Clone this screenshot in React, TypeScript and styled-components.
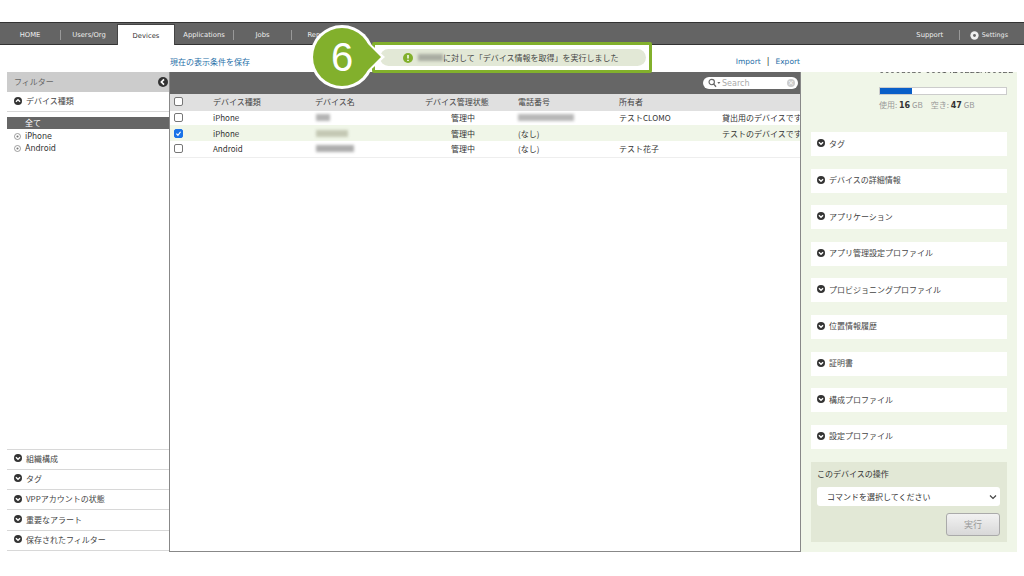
import { FC } from 'react';
import styled, { createGlobalStyle } from 'styled-components';

const FONT = `"DejaVu Sans", "Noto Sans CJK JP", sans-serif`;
const JP = `"Noto Sans CJK JP", "Noto Sans", sans-serif`;

const GlobalStyle = createGlobalStyle`
  html, body {
    margin: 0;
    background: #fff;
    overflow: hidden;
  }
  * {
    box-sizing: border-box;
  }
`;

const devices = [
  { type: 'iPhone', status: '管理中', phone: '', owner: 'テストCLOMO', note: '貸出用のデバイスです', nameW: 14, nameTone: '#b4b4b4' },
  { type: 'iPhone', status: '管理中', phone: '(なし)', owner: '', note: 'テストのデバイスです', nameW: 32, nameTone: '#c4c8b4', selected: true },
  { type: 'Android', status: '管理中', phone: '(なし)', owner: 'テスト花子', note: '', nameW: 38, nameTone: '#adadad' },
];

const leftSections = ['組織構成', 'タグ', 'VPPアカウントの状態', '重要なアラート', '保存されたフィルター'];
const rightSections = [
  'タグ',
  'デバイスの詳細情報',
  'アプリケーション',
  'アプリ管理設定プロファイル',
  'プロビジョニングプロファイル',
  '位置情報履歴',
  '証明書',
  '構成プロファイル',
  '設定プロファイル',
];

const Chevron: FC<{ up?: boolean; left?: boolean; size?: number }> = ({ up, left, size = 8 }) => (
  <svg width={size} height={size} viewBox="0 0 10 10" style={{ flex: 'none' }}>
    <circle cx="5" cy="5" r="5" fill="#333" />
    <path
      d={left ? 'M6 2.4 3.4 5 6 7.6' : up ? 'M2.4 6 5 3.4 7.6 6' : 'M2.4 4 5 6.6 7.6 4'}
      fill="none"
      stroke="#fff"
      strokeWidth="1.7"
    />
  </svg>
);

const RadioMark: FC = () => (
  <svg width="7" height="7" viewBox="0 0 10 10" style={{ flex: 'none' }}>
    <circle cx="5" cy="5" r="4.3" fill="none" stroke="#777" strokeWidth="1" />
    <circle cx="5" cy="5" r="1.5" fill="#777" />
  </svg>
);

const Check: FC<{ on?: boolean }> = ({ on }) => (
  <CheckBox $on={on}>
    {on && (
      <svg width="9" height="9" viewBox="0 0 10 10">
        <path d="M2 5.2 4.2 7.5 8 2.5" fill="none" stroke="#fff" strokeWidth="1.7" />
      </svg>
    )}
  </CheckBox>
);

const App: FC = () => {
  return (
    <>
      <GlobalStyle />
      <Page>
        <NavBar>
          <NavItem $w={60}>HOME</NavItem>
          <NavSep />
          <NavItem $w={56}>Users/Org</NavItem>
          <ActiveTab>Devices</ActiveTab>
          <NavItem $w={58}>Applications</NavItem>
          <NavSep />
          <NavItem $w={57}>Jobs</NavItem>
          <NavSep />
          <NavItem $w={57}>Reports</NavItem>
          <NavRight>
            <NavItem $w={58}>Support</NavItem>
            <NavSep />
            <SettingsItem>
              <svg width="9" height="9" viewBox="0 0 10 10">
                <circle cx="5" cy="5" r="4.6" fill="#eee" />
                <circle cx="5" cy="5" r="1.6" fill="#666" />
              </svg>
              Settings
            </SettingsItem>
          </NavRight>
        </NavBar>

        <LinkRow>
          <SaveLink>現在の表示条件を保存</SaveLink>
          <ImportExport>
            <BlueLink>Import</BlueLink>
            <Bar>|</Bar>
            <BlueLink>Export</BlueLink>
          </ImportExport>
        </LinkRow>

        <Main>
          <LeftPanel>
            <FilterHead>
              フィルター
              <Chevron left size={10} />
            </FilterHead>
            <SectionRow $open>
              <Chevron up />
              デバイス種類
            </SectionRow>
            <FilterList>
              <AllRow>全て</AllRow>
              <FilterOption>
                <RadioMark />
                iPhone
              </FilterOption>
              <FilterOption>
                <RadioMark />
                Android
              </FilterOption>
            </FilterList>
            {leftSections.map((s) => (
              <SectionRow key={s}>
                <Chevron />
                {s}
              </SectionRow>
            ))}
          </LeftPanel>

          <CenterPanel>
            <Toolbar>
              <SearchPill>
                <svg width="13" height="10" viewBox="0 0 14 10">
                  <circle cx="4" cy="4" r="2.9" fill="none" stroke="#666" strokeWidth="1.2" />
                  <path d="M6 6 8.6 9" stroke="#666" strokeWidth="1.4" />
                  <path d="M10 4h3.4l-1.7 2.2z" fill="#666" />
                </svg>
                <SearchText>Search</SearchText>
                <ClearDot>×</ClearDot>
              </SearchPill>
            </Toolbar>
            <HeadRow>
              <Check />
              <span>デバイス種類</span>
              <span>デバイス名</span>
              <span>デバイス管理状態</span>
              <span>電話番号</span>
              <span>所有者</span>
              <span />
            </HeadRow>
            {devices.map((d, i) => (
              <BodyRow key={i} $selected={d.selected} $tall={i > 0}>
                <Check on={d.selected} />
                <span>{d.type}</span>
                <NameCell>
                  <Smudge $tone={d.nameTone} style={{ width: d.nameW }} />
                </NameCell>
                <StatusCell>{d.status}</StatusCell>
                <span>{d.phone || <Smudge $tone="#b8b8b8" style={{ width: 56 }} />}</span>
                <span>{d.owner}</span>
                <NoteCell>{d.note}</NoteCell>
              </BodyRow>
            ))}
            <TableEnd />
          </CenterPanel>

          <RightPanel>
            <IdLine>00008030-00014D0E21A0002E</IdLine>
            <Storage>
              <StorageTrack>
                <StorageFill style={{ width: '25%' }} />
              </StorageTrack>
              <StorageText>
                使用: <b>16</b> GB　空き: <b>47</b> GB
              </StorageText>
            </Storage>
            <Accordions>
              {rightSections.map((s) => (
                <AccordionRow key={s}>
                  <Chevron />
                  {s}
                </AccordionRow>
              ))}
            </Accordions>
            <OperationBox>
              <OperationTitle>このデバイスの操作</OperationTitle>
              <CommandSelect>
                コマンドを選択してください
                <svg width="8" height="6" viewBox="0 0 8 6">
                  <path d="M1 1.5 4 4.5 7 1.5" fill="none" stroke="#444" strokeWidth="1.2" />
                </svg>
              </CommandSelect>
              <RunButton>実行</RunButton>
            </OperationBox>
          </RightPanel>
        </Main>

        <Callout>
          <Badge>
            <svg width="76" height="66" viewBox="0 0 76 66">
              <path d="M54 14 75 33 54 52z" fill="#fff" />
              <circle cx="32" cy="33" r="32" fill="#fff" />
              <circle cx="32" cy="33" r="29" fill="#82b02c" />
              <path d="M56 18 71 33 56 48z" fill="#82b02c" />
            </svg>
            <BadgeNumber>6</BadgeNumber>
          </Badge>
          <MessageBox>
            <MessagePill>
              <svg width="10" height="10" viewBox="0 0 10 10" style={{ flex: 'none' }}>
                <circle cx="5" cy="5" r="5" fill="#82b02c" />
                <path d="M5 2v3.4M5 6.7v1.2" stroke="#fff" strokeWidth="1.5" />
              </svg>
              <Smudge $tone="#a9aca2" style={{ width: 25, marginLeft: 5 }} />
              に対して「デバイス情報を取得」を実行しました
            </MessagePill>
          </MessageBox>
        </Callout>
      </Page>
    </>
  );
};

export default App;

const Page = styled.div`
  position: relative;
  width: 1024px;
  height: 576px;
  padding-top: 22px;
  font-family: ${FONT};
  color: #333;
  overflow: hidden;
`;

const NavBar = styled.div`
  display: flex;
  align-items: center;
  height: 23px;
  background: #646464;
  border-top: 1px solid #333;
  border-bottom: 1px solid #333;
  color: #eee;
  font-size: 6.8px;
`;

const NavItem = styled.div<{ $w: number }>`
  width: ${(p) => p.$w}px;
  padding-top: 3px;
  text-align: center;
`;

const NavSep = styled.div`
  width: 1px;
  height: 10px;
  margin-top: 3px;
  background: #999;
`;

const ActiveTab = styled.div`
  align-self: flex-end;
  width: 58px;
  height: 21px;
  margin-bottom: -1px;
  padding-top: 7px;
  background: #fff;
  border: 1px solid #444;
  border-bottom: none;
  color: #333;
  text-align: center;
`;

const NavRight = styled.div`
  display: flex;
  align-items: center;
  margin-left: auto;
  padding-right: 16px;
`;

const SettingsItem = styled.div`
  display: flex;
  align-items: center;
  gap: 3px;
  margin-left: 10px;
  padding-top: 3px;
  font-size: 6.4px;
`;

const LinkRow = styled.div`
  display: flex;
  align-items: center;
  height: 27px;
  padding: 6px 224px 0 170px;
  font-size: 8px;
`;

const SaveLink = styled.span`
  font-family: ${JP};
  color: #1f6fa8;
`;

const ImportExport = styled.div`
  display: flex;
  gap: 6px;
  margin-left: auto;
`;

const BlueLink = styled.span`
  color: #1f6fa8;
  font-size: 7.5px;
`;

const Bar = styled.span`
  color: #333;
`;

const Main = styled.div`
  display: flex;
  align-items: stretch;
  height: 480px;
  margin-left: 7px;
  width: 1010px;
`;

const LeftPanel = styled.div`
  display: flex;
  flex-direction: column;
  width: 162px;
  margin-bottom: 1px;
  font-family: ${JP};
  font-size: 8px;
`;

const FilterHead = styled.div`
  display: flex;
  align-items: center;
  justify-content: space-between;
  height: 20px;
  padding: 0 1px 1px 7px;
  background: #ccc;
  color: #666;
`;

const SectionRow = styled.div<{ $open?: boolean }>`
  display: flex;
  align-items: center;
  gap: 4px;
  height: 20.3px;
  flex: none;
  padding: 0 0 2px 7px;
  background: #fff;
  border-bottom: 1px solid #d8d8d8;
  color: #444;
`;

const FilterList = styled.div`
  flex: 1;
  padding-top: 5px;
  border-bottom: 1px solid #d8d8d8;
`;

const AllRow = styled.div`
  height: 12px;
  padding-left: 18px;
  line-height: 12px;
  background: #666;
  color: #fff;
`;

const FilterOption = styled.div`
  display: flex;
  align-items: center;
  gap: 4px;
  height: 12px;
  padding-left: 7px;
  font-family: ${FONT};
  font-size: 8px;

  ${AllRow} + & {
    margin-top: 1px;
  }
`;

const CenterPanel = styled.div`
  display: flex;
  flex-direction: column;
  width: 632px;
  border-left: 1px solid #888;
  border-right: 1px solid #888;
  border-bottom: 1px solid #888;
  font-family: ${JP};
  font-size: 8px;
  overflow: hidden;
`;

const Toolbar = styled.div`
  display: flex;
  align-items: center;
  justify-content: flex-end;
  height: 22px;
  padding-right: 2px;
  background: #666;
`;

const SearchPill = styled.div`
  display: flex;
  align-items: center;
  width: 95px;
  height: 12px;
  padding: 0 3px 0 5px;
  border-radius: 6px;
  background: #fff;
`;

const SearchText = styled.span`
  margin-left: 1px;
  color: #aaa;
  font-family: ${FONT};
  font-size: 8px;
`;

const ClearDot = styled.span`
  display: flex;
  align-items: center;
  justify-content: center;
  width: 8px;
  height: 8px;
  margin-left: auto;
  border-radius: 50%;
  background: #ccc;
  color: #fff;
  font-family: ${FONT};
  font-size: 7px;
`;

const rowColumns = '43px 102px 110px 93px 101px 103px 1fr';

const HeadRow = styled.div`
  display: grid;
  grid-template-columns: ${rowColumns};
  align-items: center;
  height: 17px;
  padding-bottom: 2px;
  background: #e0e0e0;
  color: #444;
`;

const BodyRow = styled.div<{ $selected?: boolean; $tall?: boolean }>`
  display: grid;
  grid-template-columns: ${rowColumns};
  align-items: center;
  height: ${(p) => (p.$tall ? 16 : 14)}px;
  padding-bottom: ${(p) => (p.$selected ? 0 : 1)}px;
  background: ${(p) => (p.$selected ? '#f0f6e8' : '#fff')};
  color: #333;
  white-space: nowrap;
`;

const NameCell = styled.span`
  display: flex;
  padding-left: 1px;
`;

const StatusCell = styled.span`
  padding-left: 26px;
`;

const NoteCell = styled.span`
  overflow: hidden;
`;

const TableEnd = styled.div`
  height: 1px;
  background: #eee;
`;

const CheckBox = styled.span<{ $on?: boolean }>`
  display: flex;
  align-items: center;
  justify-content: center;
  width: 9px;
  height: 9px;
  margin-left: 4px;
  border-radius: 2px;
  border: 1px solid ${(p) => (p.$on ? '#1a73e8' : '#777')};
  background: ${(p) => (p.$on ? '#1a73e8' : '#fff')};
`;

const Smudge = styled.span<{ $tone: string }>`
  display: inline-block;
  flex: none;
  height: 7px;
  background: ${(p) => p.$tone};
  filter: blur(1.6px);
`;

const RightPanel = styled.div`
  display: flex;
  flex-direction: column;
  width: 216px;
  padding: 0 10px;
  background: #f0f6e8;
  overflow: hidden;
`;

const IdLine = styled.div`
  height: 4px;
  margin: -4px 0 4px 68px;
  color: #555;
  font-size: 8.5px;
  line-height: 4px;
  white-space: nowrap;
  filter: blur(0.4px);
`;

const Storage = styled.div`
  margin: 11px 0 0 68px;
`;

const StorageTrack = styled.div`
  height: 8px;
  background: #fff;
  border: 1px solid #ccc;
`;

const StorageFill = styled.div`
  height: 100%;
  background: #0a5fc8;
`;

const StorageText = styled.div`
  margin-top: 4px;
  color: #999;
  font-family: ${JP};
  font-size: 8px;

  b {
    color: #333;
    font-family: ${FONT};
  }
`;

const Accordions = styled.div`
  display: flex;
  flex-direction: column;
  gap: 12.6px;
  margin-top: 22px;
`;

const AccordionRow = styled.div`
  display: flex;
  align-items: center;
  gap: 4px;
  height: 24px;
  padding: 0 0 2px 6px;
  background: #fff;
  color: #444;
  font-family: ${JP};
  font-size: 8px;
`;

const OperationBox = styled.div`
  display: flex;
  flex-direction: column;
  height: 80px;
  margin-top: 13px;
  padding: 6px 7px 6px 6px;
  background: #e2e8d6;
  font-family: ${JP};
  font-size: 8px;
`;

const OperationTitle = styled.div`
  height: 12px;
  line-height: 12px;
  color: #333;
`;

const CommandSelect = styled.div`
  display: flex;
  align-items: center;
  justify-content: space-between;
  height: 20px;
  margin-top: 7px;
  padding: 0 3px 0 10px;
  border-radius: 3px;
  background: #fff;
  color: #333;
`;

const RunButton = styled.div`
  display: flex;
  align-items: center;
  justify-content: center;
  align-self: flex-end;
  width: 54px;
  height: 23px;
  margin-top: 7px;
  border: 1px solid #aaa;
  border-radius: 3px;
  background: linear-gradient(#f2f2f2, #d8d8d8);
  color: #999;
  font-size: 9px;
`;

const Callout = styled.div`
  position: absolute;
  left: 310px;
  top: 24px;
  width: 342px;
  height: 66px;
`;

const Badge = styled.div`
  position: absolute;
  left: 0;
  top: 0;
  z-index: 1;
  width: 76px;
  height: 66px;
`;

const BadgeNumber = styled.span`
  position: absolute;
  left: 0;
  top: 0;
  width: 64px;
  color: #fff;
  font-family: "Liberation Sans", sans-serif;
  font-size: 40px;
  line-height: 66px;
  text-align: center;
`;

const MessageBox = styled.div`
  position: absolute;
  left: 62px;
  top: 18px;
  width: 280px;
  height: 31px;
  padding: 4px 3px 4px 5px;
  background: #fff;
  border: 3px solid #82b02c;
  border-radius: 2px;
`;

const MessagePill = styled.div`
  display: flex;
  align-items: center;
  height: 100%;
  padding-left: 23px;
  border-radius: 10px;
  background: #e2e8d6;
  color: #444;
  font-family: ${JP};
  font-size: 8px;
  white-space: nowrap;
`;
